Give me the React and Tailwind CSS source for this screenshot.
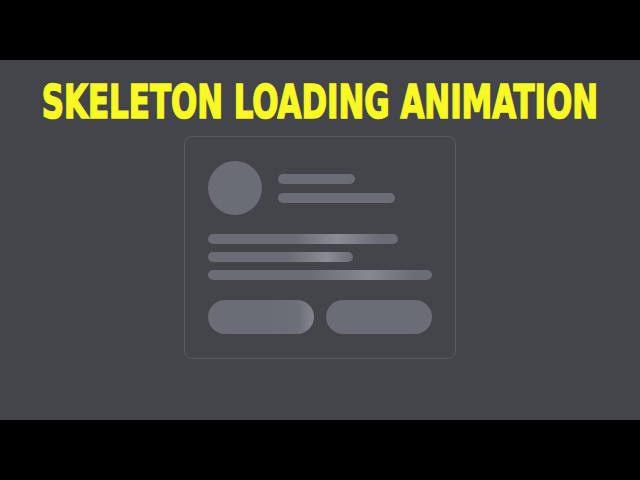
export default function App() {
  const bar = "h-[10px] rounded-full bg-[#6b6d76]";
  return (
    <div className="w-full h-[480px] bg-black flex flex-col">
      <div className="h-[60px] shrink-0" />
      <main className="h-[360px] shrink-0 bg-[#44454a] flex flex-col items-center">
        <h1
          className="mt-[15px] h-[52px] flex items-center justify-center text-[#f8f823] text-[47px] leading-none font-bold tracking-normal whitespace-nowrap scale-x-[0.73]"
          style={{ fontFamily: '"DejaVu Sans Condensed", "DejaVu Sans", sans-serif', WebkitTextStroke: "1.6px #f8f823" }}
        >
          SKELETON LOADING ANIMATION
        </h1>

        {/* skeleton card */}
        <div className="mt-[9px] w-[272px] border border-[#5a5b61] rounded-lg pt-6 pb-6 px-[23px] flex flex-col">
          <div className="flex items-center gap-4">
            <div className="size-[54px] rounded-full bg-[#6b6d76]" />
            <div className="flex flex-col gap-[9px]">
              <div className={`${bar} w-[77px]`} />
              <div className={`${bar} w-[117px]`} />
            </div>
          </div>

          <div className="mt-[19px] flex flex-col gap-2">
            <div className="h-[10px] w-[190px] rounded-full bg-linear-to-r from-[#6b6d76] from-45% via-[#8a8c94] via-68% to-[#6b6d76] to-90%" />
            <div className="h-[10px] w-[145px] rounded-full bg-linear-to-r from-[#6b6d76] from-55% via-[#8a8c94] via-82% to-[#6b6d76] to-100%" />
            <div className="h-[10px] w-[224px] rounded-full bg-linear-to-r from-[#6b6d76] from-45% via-[#878991] via-72% to-[#6b6d76] to-92%" />
          </div>

          <div className="mt-[20px] flex gap-3">
            <div className="h-[34px] w-[106px] rounded-full bg-linear-to-r from-[#6b6d76] from-60% via-[#6e7079] via-85% to-[#84868e] to-100%" />
            <div className="h-[34px] w-[106px] rounded-full bg-[#6b6d76]" />
          </div>
        </div>
      </main>
      <div className="flex-1" />
    </div>
  );
}
